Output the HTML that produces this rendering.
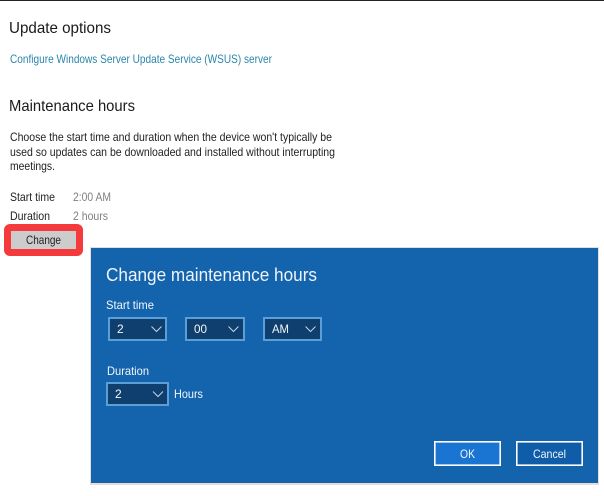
<!DOCTYPE html>
<html lang="en">
<head>
<meta charset="utf-8">
<title>Maintenance hours</title>
<style>
html,body{margin:0;padding:0;background:#fff;width:604px;height:496px;overflow:hidden}
svg{display:block;filter:blur(.35px)}
text{font-family:"Liberation Sans",sans-serif}
</style>
</head>
<body>
<svg width="604" height="496" viewBox="0 0 604 496" xmlns="http://www.w3.org/2000/svg">
<rect width="604" height="496" fill="#fff"/>
<rect x="0" y="0" width="604" height="1" fill="#222"/>

<text x="9" y="33" font-size="16" fill="#1a1a1a" textLength="102" lengthAdjust="spacingAndGlyphs">Update options</text>
<text x="10" y="63" font-size="12" fill="#2a86ab" textLength="262" lengthAdjust="spacingAndGlyphs">Configure Windows Server Update Service (WSUS) server</text>
<text x="9" y="111" font-size="16" fill="#1a1a1a" textLength="126" lengthAdjust="spacingAndGlyphs">Maintenance hours</text>

<text x="10" y="141" font-size="12" fill="#222" textLength="322" lengthAdjust="spacingAndGlyphs">Choose the start time and duration when the device won't typically be</text>
<text x="10" y="156" font-size="12" fill="#222" textLength="325" lengthAdjust="spacingAndGlyphs">used so updates can be downloaded and installed without interrupting</text>
<text x="10" y="170" font-size="12" fill="#222" textLength="45" lengthAdjust="spacingAndGlyphs">meetings.</text>

<text x="10" y="201" font-size="12" fill="#222" textLength="45" lengthAdjust="spacingAndGlyphs">Start time</text>
<text x="73" y="201" font-size="12" fill="#808080" textLength="38" lengthAdjust="spacingAndGlyphs">2:00 AM</text>
<text x="10" y="220" font-size="12" fill="#222" textLength="40" lengthAdjust="spacingAndGlyphs">Duration</text>
<text x="73" y="220" font-size="12" fill="#808080" textLength="35" lengthAdjust="spacingAndGlyphs">2 hours</text>

<rect x="4" y="224" width="79" height="32" rx="6" fill="#f43a3c"/>
<rect x="11" y="231" width="65" height="18" fill="#cccccc"/>
<text x="26" y="244" font-size="12" fill="#222" textLength="35" lengthAdjust="spacingAndGlyphs">Change</text>

<rect x="90" y="247" width="509" height="238" fill="#e4dfd6"/>
<rect x="91" y="248" width="507" height="235" fill="#1464ad"/>

<text x="106" y="281" font-size="18" fill="#eef4fa" textLength="211" lengthAdjust="spacingAndGlyphs">Change maintenance hours</text>
<text x="106" y="309" font-size="12" fill="#f2f6fa" textLength="48" lengthAdjust="spacingAndGlyphs">Start time</text>

<g fill="#0f3f6e" stroke="#5c9fd6" stroke-width="2">
<rect x="109" y="318" width="57" height="22"/>
<rect x="186" y="318" width="58" height="22"/>
<rect x="264" y="318" width="57" height="22"/>
<rect x="107" y="383" width="61" height="22"/>
</g>
<g fill="none" stroke="#c3d6e8" stroke-width="1">
<path d="M151.500 326.500l5 5 5-5"/>
<path d="M228.500 326.500l5 5 5-5"/>
<path d="M305.500 326.500l5 5 5-5"/>
<path d="M153 391.500l5 5 5-5"/>
</g>
<g font-size="12" fill="#f2f6fa">
<text x="117" y="333">2</text>
<text x="194" y="333" textLength="13" lengthAdjust="spacingAndGlyphs">00</text>
<text x="272" y="333" textLength="17" lengthAdjust="spacingAndGlyphs">AM</text>
<text x="115" y="398">2</text>
</g>
<text x="107" y="375" font-size="12" fill="#f2f6fa" textLength="42" lengthAdjust="spacingAndGlyphs">Duration</text>
<text x="174" y="398" font-size="12" fill="#f2f6fa" textLength="29" lengthAdjust="spacingAndGlyphs">Hours</text>

<rect x="434.800" y="441.800" width="65.400" height="23.400" fill="#1a74d2" stroke="#fff" stroke-width="1.600"/>
<rect x="516.800" y="441.800" width="65.400" height="23.400" fill="#0f5ca8" stroke="#fff" stroke-width="1.600"/>
<text x="460" y="458" font-size="12" fill="#f2f6fa" textLength="15" lengthAdjust="spacingAndGlyphs">OK</text>
<text x="533" y="458" font-size="12" fill="#f2f6fa" textLength="33" lengthAdjust="spacingAndGlyphs">Cancel</text>
</svg>
</body>
</html>
